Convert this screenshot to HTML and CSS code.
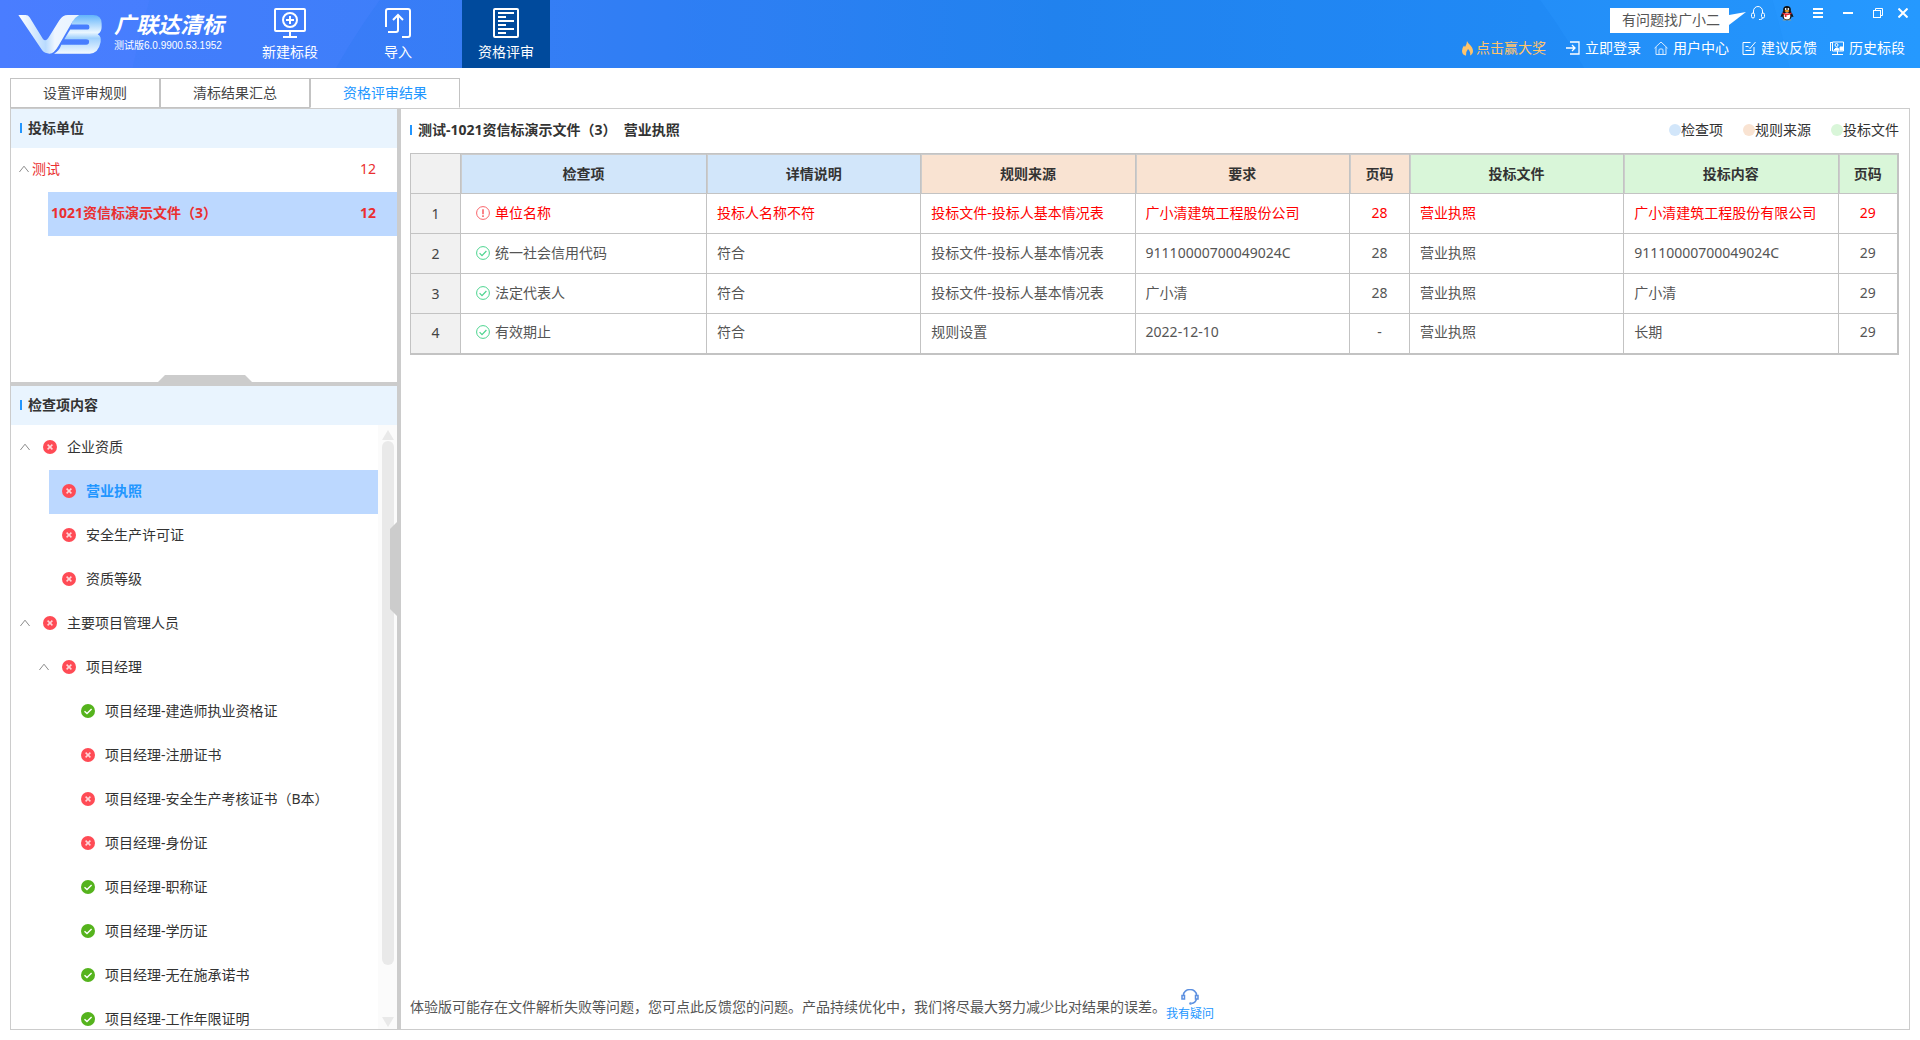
FILE: index.html
```html
<!DOCTYPE html>
<html lang="zh-CN">
<head>
<meta charset="utf-8">
<title>广联达清标</title>
<link rel="stylesheet" href="styles.css">
</head>
<body>
<svg class="defs" aria-hidden="true">
  <symbol id="bad" viewBox="0 0 14 14"><circle cx="7" cy="7" r="7" fill="#ff4b55"/><path d="M4.600 4.600l4.800 4.800M9.400 4.600l-4.800 4.800" stroke="#ffd5d8" stroke-width="1.500" fill="none"/></symbol>
  <symbol id="good" viewBox="0 0 14 14"><circle cx="7" cy="7" r="7" fill="#55b31d"/><path d="M3.500 7.200l2.500 2.400 4.600-4.600" stroke="#fff" stroke-width="1.400" fill="none"/></symbol>
  <symbol id="chev" viewBox="0 0 10 8"><path d="M.4 7L5 1.200 9.600 7" stroke="#8c8c8c" fill="none"/></symbol>
  <symbol id="warn" viewBox="0 0 14 14"><circle cx="7" cy="7" r="6.400" stroke="#f9646a" fill="none"/><path d="M7 3.200v5M7 9.300v1.600" stroke="#f9646a" stroke-width="1.600" fill="none"/></symbol>
  <symbol id="pass" viewBox="0 0 14 14"><circle cx="7" cy="7" r="6.400" stroke="#4bd48e" fill="none"/><path d="M3.600 7.200l2.400 2.400 4.400-4.600" stroke="#4bd48e" stroke-width="1.200" fill="none"/></symbol>
</svg>

<header class="topbar">
  <svg class="backdrop" viewBox="0 0 1920 68" preserveAspectRatio="none" aria-hidden="true">
    <circle cx="961" cy="239" r="846" fill="#0a6fe0" opacity=".06"/>
    <circle cx="960" cy="423" r="718" fill="#0a6fe0" opacity=".1"/>
  </svg>
  <div class="brand">
    <svg class="logo" viewBox="0 0 252 118" role="img" aria-label="VB">
      <defs>
        <linearGradient id="gb" x1="0" y1="0" x2="0" y2="1"><stop offset="0" stop-color="#62b4fb"/><stop offset=".45" stop-color="#eaf6ff"/><stop offset=".6" stop-color="#9fd0fd"/><stop offset="1" stop-color="#f4faff"/></linearGradient>
        <linearGradient id="gv" x1="0" y1="0" x2="1" y2="0"><stop offset="0" stop-color="#fff"/><stop offset=".45" stop-color="#b9dbfe"/><stop offset=".6" stop-color="#eef6ff"/><stop offset="1" stop-color="#e8f4ff"/></linearGradient>
      </defs>
      <path fill="url(#gb)" d="M172 0H226Q252 0 252 26V36Q252 52 240 58Q252 64 249 82Q242 117 216 117H108Q124 108 130 90H205Q214 90 214 80Q214 73 205 73H139L157 44H208Q215 44 215 36Q215 29 208 29H160Z"/>
      <path fill="url(#gv)" d="M0 0H22Q30 0 34 7L74 72Q82 82 90 70L124 16Q134 0 150 0H184Q172 6 164 20L122 92Q108 117 94 117Q80 117 72 107Z"/>
    </svg>
    <div class="names">
      <strong class="product">广联达清标</strong>
      <span class="version">测试版6.0.9900.53.1952</span>
    </div>
  </div>
  <nav class="tools">
    <button class="tool" type="button">
      <svg width="32" height="30" viewBox="0 0 32 30" fill="none" stroke="#fff" stroke-width="2"><rect x="1" y="1" width="30" height="22" rx="1"/><circle cx="16" cy="12" r="7"/><path d="M16 8v8M12 12h8M16 23v6M9 29h14"/></svg>
      新建标段
    </button>
    <button class="tool" type="button">
      <svg width="32" height="30" viewBox="0 0 32 30" fill="none" stroke="#fff" stroke-width="2"><path d="M4 19V3a2 2 0 0 1 2-2h20a2 2 0 0 1 2 2v24a2 2 0 0 1-2 2h-6M6 24h8q2 0 2-2V8M11 12l5-5 5 5"/></svg>
      导入
    </button>
    <button class="tool current" type="button">
      <svg width="32" height="30" viewBox="0 0 32 30" fill="none" stroke="#fff" stroke-width="2"><rect x="4" y="1" width="24" height="28" rx="1"/><path d="M8 5h16M8 9h8M8 13h16M8 17h8M8 21h16M8 25h8"/></svg>
      资格评审
    </button>
  </nav>
  <div class="corner">
    <div class="window-row">
      <span class="bubble">有问题找广小二<svg class="tail" width="17" height="14" viewBox="0 0 17 14"><path d="M0 3L17 0 0 13z" fill="#fff"/></svg></span>
      <button type="button" aria-label="客服"><svg width="14" height="14" viewBox="0 0 14 14" fill="none" stroke="#fff"><path d="M2.500 7V5a4.500 4.500 0 0 1 9 0v2M8 13.500h1.500q2 0 2-2"/><rect x=".5" y="7" width="3" height="5" rx="1.500"/><rect x="10.500" y="7" width="3" height="5" rx="1.500"/></svg></button>
      <button type="button" aria-label="QQ"><svg width="14" height="15" viewBox="0 0 14 15"><ellipse cx="7" cy="9" rx="5" ry="5.200" fill="#111"/><path d="M2 7L.5 11l2-.5zM12 7l1.500 4-2-.5z" fill="#111"/><circle cx="7" cy="4" r="3.900" fill="#111"/><ellipse cx="7" cy="10" rx="3.300" ry="3.600" fill="#fff"/><circle cx="5.700" cy="3" r=".9" fill="#fff"/><circle cx="8.300" cy="3" r=".9" fill="#fff"/><ellipse cx="7" cy="5" rx="2.400" ry=".9" fill="#f9a825"/><path d="M2.500 6.500q4.500 2 9 0v1.600q-2.500 1.200-5 1v2H4.800V8.800L2.500 8z" fill="#e8262c"/><path d="M2.500 14.300q2-1.600 4 0zM7.500 14.300q2-1.600 4 0z" fill="#f9a825"/></svg></button>
      <button type="button" aria-label="菜单"><svg width="10" height="10" viewBox="0 0 10 10" stroke="#fff" stroke-width="2"><path d="M0 1h10M0 5h10M0 9h10"/></svg></button>
      <button type="button" aria-label="最小化"><svg width="10" height="10" viewBox="0 0 10 10" stroke="#fff" stroke-width="2"><path d="M0 5h10"/></svg></button>
      <button type="button" aria-label="还原"><svg width="10" height="10" viewBox="0 0 10 10" fill="none" stroke="#fff"><rect x=".5" y="2.500" width="7" height="7"/><path d="M2.500 2.500v-2h7v7h-2"/></svg></button>
      <button type="button" aria-label="关闭"><svg width="10" height="10" viewBox="0 0 10 10" stroke="#fff" stroke-width="2"><path d="M.5.5l9 9M9.500.5l-9 9"/></svg></button>
    </div>
    <nav class="links">
      <a class="prize" href="#"><svg width="11" height="15" viewBox="0 0 11 15"><path fill="#ffc46b" d="M5 0C6 3 11 5 11 10a5 5 0 0 1-3 4.500Q9 11 6 8 3.500 11 4 14.700A5 5 0 0 1 0 10Q0 7 2 4.500L3 6Q5 3 5 0z"/></svg>点击赢大奖</a>
      <a href="#"><svg width="14" height="14" viewBox="0 0 14 14" fill="none" stroke="#fff" stroke-width="1.300"><path d="M4 1h9v12H4M0 7h9M6 4l3 3-3 3"/></svg>立即登录</a>
      <a href="#"><svg width="14" height="14" viewBox="0 0 14 14" fill="none" stroke="#d6eaff"><path d="M.5 7.200L7 1l6.500 6.200M2 6v7.500h10V6M5 13.500V9q0-1 1-1h2q1 0 1 1v4.500"/></svg>用户中心</a>
      <a href="#"><svg width="14" height="14" viewBox="0 0 14 14" fill="none" stroke="#fff"><path d="M8.500 1.500H1v12h11V6M3.500 5.500h3M3.500 9.500h6M7 6.500l1 1L13.500 1"/></svg>建议反馈</a>
      <a href="#"><svg width="14" height="14" viewBox="0 0 14 14" fill="none" stroke="#fff"><path d="M0 1.500h2M2.500 1h11v9h-11zM.5 1v9M2 13.500h11M7.500 10v3.500"/><circle cx="6.500" cy="4" r="1.500"/><path d="M4 9l2-2h2l1 2zM10 9V6h3v3z" fill="#fff"/></svg>历史标段</a>
    </nav>
  </div>
</header>

<nav class="tabs">
  <button class="tab" type="button">设置评审规则</button>
  <button class="tab" type="button">清标结果汇总</button>
  <button class="tab active" type="button">资格评审结果</button>
</nav>

<main class="workspace">
  <aside class="side">
    <section class="bidders">
      <h2 class="panel-title">投标单位</h2>
      <div class="bidder"><svg class="chev"><use href="#chev"/></svg><span>测试</span><span class="count">12</span></div>
      <div class="bidder chosen"><span>1021资信标演示文件（3）</span><span class="count">12</span></div>
    </section>
    <div class="split-h"><i class="grip-h"></i></div>
    <section class="checks">
      <h2 class="panel-title">检查项内容</h2>
      <div class="tree-box">
        <ul class="tree">
          <li class="l1"><svg class="chev"><use href="#chev"/></svg><svg class="mark"><use href="#bad"/></svg>企业资质</li>
          <li class="l2 chosen"><svg class="mark"><use href="#bad"/></svg>营业执照</li>
          <li class="l2"><svg class="mark"><use href="#bad"/></svg>安全生产许可证</li>
          <li class="l2"><svg class="mark"><use href="#bad"/></svg>资质等级</li>
          <li class="l1"><svg class="chev"><use href="#chev"/></svg><svg class="mark"><use href="#bad"/></svg>主要项目管理人员</li>
          <li class="l2 parent"><svg class="chev"><use href="#chev"/></svg><svg class="mark"><use href="#bad"/></svg>项目经理</li>
          <li class="l3"><svg class="mark"><use href="#good"/></svg>项目经理-建造师执业资格证</li>
          <li class="l3"><svg class="mark"><use href="#bad"/></svg>项目经理-注册证书</li>
          <li class="l3"><svg class="mark"><use href="#bad"/></svg>项目经理-安全生产考核证书（B本）</li>
          <li class="l3"><svg class="mark"><use href="#bad"/></svg>项目经理-身份证</li>
          <li class="l3"><svg class="mark"><use href="#good"/></svg>项目经理-职称证</li>
          <li class="l3"><svg class="mark"><use href="#good"/></svg>项目经理-学历证</li>
          <li class="l3"><svg class="mark"><use href="#good"/></svg>项目经理-无在施承诺书</li>
          <li class="l3"><svg class="mark"><use href="#good"/></svg>项目经理-工作年限证明</li>
        </ul>
        <div class="scroll" aria-hidden="true"><i class="up"></i><i class="thumb"></i><i class="rest"></i><i class="down"></i></div>
      </div>
    </section>
  </aside>
  <div class="split-v"><i class="grip-v"></i></div>
  <section class="result">
    <div class="result-head">
      <h1 class="result-title">测试-1021资信标演示文件（3）&nbsp; 营业执照</h1>
      <ul class="legend">
        <li><i class="dot blue"></i>检查项</li>
        <li><i class="dot orange"></i>规则来源</li>
        <li><i class="dot green"></i>投标文件</li>
      </ul>
    </div>
    <table class="grid">
      <colgroup><col class="c-no"><col class="c-item"><col><col><col><col class="c-page"><col><col><col class="c-page"></colgroup>
      <thead>
        <tr><td class="no"></td><th class="blue">检查项</th><th class="blue">详情说明</th><th class="orange">规则来源</th><th class="orange">要求</th><th class="orange">页码</th><th class="green">投标文件</th><th class="green">投标内容</th><th class="green">页码</th></tr>
      </thead>
      <tbody>
        <tr class="bad"><td class="no">1</td><td class="item"><svg class="mark"><use href="#warn"/></svg>单位名称</td><td>投标人名称不符</td><td>投标文件-投标人基本情况表</td><td>广小清建筑工程股份公司</td><td class="page">28</td><td>营业执照</td><td>广小清建筑工程股份有限公司</td><td class="page">29</td></tr>
        <tr><td class="no">2</td><td class="item"><svg class="mark"><use href="#pass"/></svg>统一社会信用代码</td><td>符合</td><td>投标文件-投标人基本情况表</td><td>91110000700049024C</td><td class="page">28</td><td>营业执照</td><td>91110000700049024C</td><td class="page">29</td></tr>
        <tr><td class="no">3</td><td class="item"><svg class="mark"><use href="#pass"/></svg>法定代表人</td><td>符合</td><td>投标文件-投标人基本情况表</td><td>广小清</td><td class="page">28</td><td>营业执照</td><td>广小清</td><td class="page">29</td></tr>
        <tr><td class="no">4</td><td class="item"><svg class="mark"><use href="#pass"/></svg>有效期止</td><td>符合</td><td>规则设置</td><td>2022-12-10</td><td class="page">-</td><td>营业执照</td><td>长期</td><td class="page">29</td></tr>
      </tbody>
    </table>
    <footer class="note">
      <p>体验版可能存在文件解析失败等问题，您可点此反馈您的问题。产品持续优化中，我们将尽最大努力减少比对结果的误差。</p>
      <a class="ask" href="#"><svg width="18" height="16" viewBox="0 0 18 16" fill="none" stroke="#5b8fe0" stroke-width="1.500"><path d="M2.500 6a6.500 5.500 0 0 1 13 0M15.500 10q-1 4-5 4.500"/><rect x="1" y="6.500" width="2.500" height="3.500"/><rect x="14.500" y="6.500" width="2.500" height="3.500"/><circle cx="9.500" cy="14.500" r=".6"/></svg>我有疑问</a>
    </footer>
  </section>
</main>
</body>
</html>
```
FILE: styles.css
```css
* { box-sizing: border-box; }

body {
  margin: 0;
  height: 100vh;
  display: flex;
  flex-direction: column;
  background: #fff;
  color: #333;
  font: 14px/20px "Noto Sans", "Noto Sans CJK SC", sans-serif;
}

h1, h2, p, ul { margin: 0; padding: 0; font-size: 14px; }
ul { list-style: none; }
a { color: inherit; text-decoration: none; }
button { margin: 0; padding: 0; border: 0; background: none; color: inherit; font: inherit; }
svg { display: block; flex: none; }
.defs { position: absolute; width: 0; height: 0; }

/* top bar */
.topbar {
  position: relative;
  flex: none;
  display: flex;
  height: 68px;
  background: linear-gradient(90deg, #4a7dff 0%, #3f80fb 25%, #2686f2 55%, #2590fa 80%, #2599ff 100%);
  color: #fff;
}
.backdrop { position: absolute; inset: 0; width: 100%; height: 100%; }
.brand, .tools, .corner { position: relative; display: flex; }
.brand { width: 246px; padding: 15px 0 0 18px; gap: 12px; }
.logo { width: 84px; height: 39px; }
.names { display: flex; flex-direction: column; gap: 2px; margin-top: -3px; }
.product { font-size: 22px; line-height: 24px; font-style: italic; white-space: nowrap; }
.version { font: 10px/16px "Liberation Sans", "Noto Sans CJK SC", sans-serif; white-space: nowrap; }
.tools { gap: 20px; }
.tool { width: 88px; padding-top: 8px; display: flex; flex-direction: column; align-items: center; gap: 4px; }
.tool.current { background: #004a9c; }
.corner { margin-left: auto; flex-direction: column; align-items: flex-end; padding: 0 12px 0 0; }
.window-row { display: flex; align-items: flex-start; height: 38px; gap: 20px; padding-top: 8px; }
.window-row button { height: 10px; display: flex; align-items: center; }
.window-row button:nth-of-type(1) { margin-left: 2px; }
.window-row button:nth-of-type(2) { margin: 0 -1px 0 -5px; }
.window-row button:nth-last-of-type(1) { margin-left: -5px; }
.bubble { position: relative; height: 25px; padding: 0 9px 0 12px; background: #fff; color: #555; line-height: 24px; }
.tail { position: absolute; left: 100%; top: 4px; }
.links { display: flex; gap: 13px; padding-right: 3px; }
.links a { display: flex; align-items: center; gap: 5px; }
.links .prize { color: #ffc46b; gap: 3px; margin-right: 7px; }

/* tabs */
.tabs { flex: none; display: flex; padding: 10px 10px 0; }
.tab { width: 150px; height: 30px; border: 1px solid #c3c3c3; color: #444; }
.tab.active { border-bottom-color: #fff; color: #2196ff; }

/* workspace */
.workspace {
  flex: 1;
  min-height: 0;
  display: flex;
  margin: 0 10px 10px;
  border: 1px solid #ccc;
}
.side { width: 386px; flex: none; display: flex; flex-direction: column; }
.panel-title {
  display: flex;
  align-items: center;
  height: 39px;
  padding: 0 0 2px 9px;
  gap: 6px;
  background: #e9f4fe;
}
.panel-title::before, .result-title::before { content: ""; width: 2px; height: 10px; background: #2196ff; }
.bidders { flex: none; height: 273px; }
.bidder { display: flex; align-items: center; height: 44px; padding: 0 21px 2px 8px; gap: 3px; color: #ea2f30; }
.bidder.chosen { margin-left: 37px; padding-left: 3px; background: #bcd8ff; font-weight: bold; }
.count { margin-left: auto; }
.split-h, .split-v { position: relative; flex: none; background: #ccc; }
.split-h { height: 4px; }
.split-v { width: 4px; }
.grip-h {
  position: absolute; left: 147px; bottom: 100%; width: 94px; height: 7px;
  background: #ccc; clip-path: polygon(0 100%, 7px 0, 87px 0, 100% 100%);
}
.grip-v {
  position: absolute; right: 100%; top: calc(50% - 47px); width: 7px; height: 94px;
  background: #ccc; clip-path: polygon(100% 0, 0 7px, 0 87px, 100% 100%);
}
.checks { flex: 1; min-height: 0; display: flex; flex-direction: column; }
.checks .panel-title { flex: none; }
.tree-box { flex: 1; min-height: 0; display: flex; overflow: hidden; }
.tree { flex: 1; padding-top: 1px; }
.tree li { display: flex; align-items: center; height: 44px; padding-bottom: 2px; gap: 10px; }
.tree .l1 { padding-left: 9px; }
.tree .l2 { margin-left: 38px; padding-left: 13px; }
.tree .parent { margin-left: 0; padding-left: 28px; }
.tree .l3 { padding-left: 70px; }
.tree .chev { margin-right: 3px; }
.tree .chosen { background: #bcd8ff; color: #2196ff; font-weight: bold; }
.chev { width: 10px; height: 8px; }
.mark { width: 14px; height: 14px; }
.scroll { width: 19px; padding: 5px 3px 2px 4px; display: flex; flex-direction: column; background: #fbfbfb; }
.up, .down { height: 10px; background: #e9e9e9; }
.up { clip-path: polygon(50% 0, 100% 100%, 0 100%); }
.down { clip-path: polygon(0 0, 100% 0, 50% 100%); }
.thumb { flex: 10; margin-top: 1px; border-radius: 6px; background: #e9e9e9; }
.rest { flex: 1; }

/* result */
.result { flex: 1; min-width: 0; display: flex; flex-direction: column; padding: 0 10px 0 9px; }
.result-head { display: flex; justify-content: space-between; align-items: center; height: 44px; padding-bottom: 2px; }
.result-title { display: flex; align-items: center; gap: 6px; }
.legend { display: flex; gap: 20px; }
.legend li { display: flex; align-items: center; }
.dot { width: 12px; height: 12px; border-radius: 50%; }
.blue { background: #d2e6fa; }
.orange { background: #f9e3d2; }
.green { background: #d9f6d9; }
.grid { width: 100%; table-layout: fixed; border-collapse: collapse; border: 2px solid #c3c3c3; border-width: 1px 2px 2px 1px; }
.c-no { width: 50px; }
.c-item { width: 246px; }
.c-page { width: 60px; }
.grid th, .grid td { height: 40px; padding: 0 10px 2px; border: 1px solid #c3c3c3; text-align: left; }
.grid th { padding-bottom: 0; text-align: center; box-shadow: inset 1px 1px 0 #ccc; }
.grid td { color: #555; }
.grid .bad td { color: #f00; }
.grid td.no { padding-bottom: 0; background: #f1f1f1; color: #444; text-align: center; }
.grid .bad td.no { color: #444; }
.grid td.page { text-align: center; }
.grid td.item { padding-left: 15px; }
.item .mark { display: inline-block; margin-right: 5px; vertical-align: -2px; }
.note { display: flex; align-items: flex-end; margin-top: auto; padding-bottom: 6px; color: #555; }
.note p { line-height: 32px; }
.ask { display: flex; flex-direction: column; align-items: center; font-size: 12px; line-height: 18px; color: #2196ff; }
```
